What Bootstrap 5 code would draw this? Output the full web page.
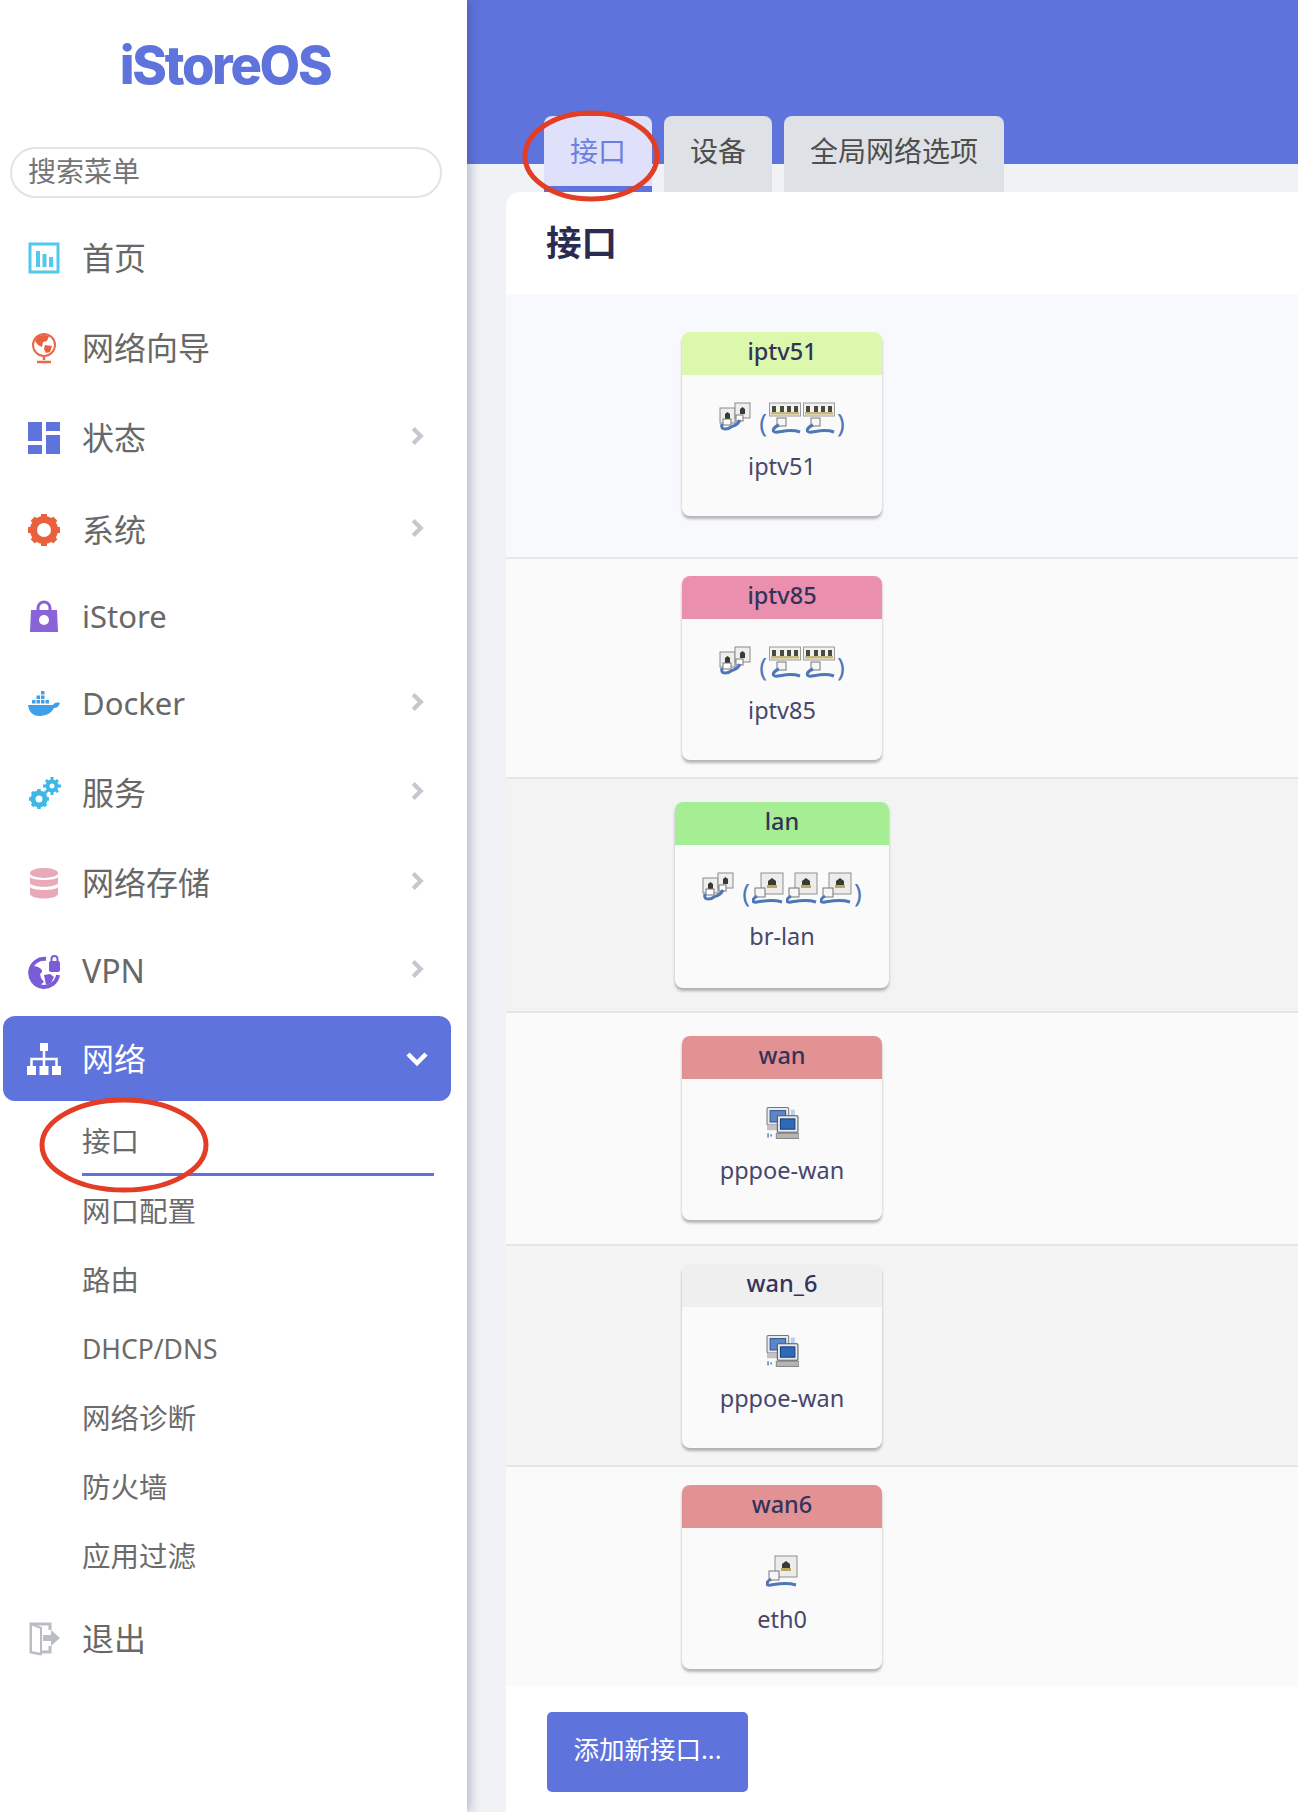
<!DOCTYPE html>
<html lang="zh-CN">
<head>
<meta charset="utf-8">
<title>iStoreOS 接口</title>
<link href="https://cdn.jsdelivr.net/npm/bootstrap@5.3.0/dist/css/bootstrap.min.css" rel="stylesheet">
<style>
html,body{height:1812px;overflow:hidden;margin:0;}
body{font-family:"Noto Sans","Noto Sans CJK SC",sans-serif;background:#f1f2f6;color:#32325d;}
.page{width:1298px;height:1812px;overflow:hidden;}
.sidebar{width:467px;flex:0 0 467px;height:1812px;background:#fff;box-shadow:3px 0 10px rgba(40,50,90,.3);z-index:2;}
.brand{height:147px;padding-top:33px;text-align:center;font-family:"Inter",sans-serif;font-weight:800;font-size:52.5px;line-height:64px;letter-spacing:-2.3px;color:#5f73dc;padding-right:17px;}
.search-box{margin-left:10px;width:432px;height:51px;font-size:28px;padding:0 16px 4px;border:2px solid #e2e3e6;box-shadow:none;}
.search-box::placeholder{color:#757575;}
.side-list{margin:17px 0 0 3px;width:448px;padding:0;list-style:none;}
.side-link{height:85px;padding:0 26px 0 23px;color:#686868;font-size:32px;border-radius:12px;text-decoration:none;}
.side-link.latin-main{font-size:31px;}
.side-link.active-item{background:#5f73dc;color:#fff;}
.ico{width:36px;height:36px;flex:0 0 36px;margin-right:20px;}
.chev{width:15px;height:22px;flex:0 0 15px;margin-left:auto;margin-top:-4px;}
.chev-down{width:24px;height:16px;flex:0 0 24px;margin-left:auto;margin-right:-4px;}
.sp2{margin-top:2px}.sp3{margin-top:3px}.sp4{margin-top:4px}.sp5{margin-top:5px}.sp7{margin-top:7px}.sp9{margin-top:6px}
.sub-list{margin:8px 0 0 82px;width:352px;padding:0;list-style:none;}
.sub-link{height:67px;margin-bottom:2px;color:#6b6b6b;font-size:28.5px;text-decoration:none;}
.sub-link.current{border-bottom:3px solid #5f73dc;}
.latin-sub{font-size:26.5px;}
.main-area{flex:1 1 auto;min-width:0;height:1812px;overflow:hidden;background:linear-gradient(#5f73dc 164px,#f1f2f6 164px);}
.tab-row{margin:116px 0 0 77px;gap:12px;height:76px;flex-wrap:nowrap;}
.tab-item{height:76px;padding:17px 26px 0;background:#dee2e6;color:#4e4e4e;font-size:28px;line-height:37px;border-radius:8px 8px 0 0;text-decoration:none;white-space:nowrap;}
.tab-item.on{background:#dfe1fb;color:#6d7ede;border-bottom:6px solid #5f73dc;}
.panel{margin-left:39px;width:860px;height:1700px;background:#fff;border-radius:14px 0 0 0;}
.panel-head{height:100px;padding:0 0 0 40px;display:flex;align-items:center;font-size:35.5px;font-weight:700;color:#2b2b52;margin:0 0 2px;}
.net-row{display:flex;align-items:center;border-bottom:2px solid #e6e6e6;}
.net-cell{width:552px;display:flex;justify-content:center;}
.r1{height:265px;background:#f8f9fd;padding-bottom:3px}.r2{height:220px;background:#fafafa}.r3{height:234px;background:#f3f3f3}.r4{height:233px;background:#fafafa;padding-bottom:2px}.r5{height:221px;background:#f4f4f4}.r6{height:219px;background:#fafafa;border-bottom:0}
.iface{width:200px;height:184px;background:#fafafa;border-radius:8px;box-shadow:0 3px 3px rgba(0,0,0,.28);overflow:hidden;text-align:center;}
.iface.wide{width:214px;height:186px;}
.iface-top{height:43px;line-height:38px;font-size:23.5px;font-weight:500;color:#33335a;}
.green1{background:#dcf8ad}.pink{background:#ea90ae}.green2{background:#a6ee94}.red{background:#e39294}.grey{background:#efefef}
.iface-icons{height:62px;padding-top:27px;display:flex;justify-content:center;align-items:flex-start;gap:2px;}
.paren{font-size:26px;line-height:40px;color:#4d76b8;margin:0;}
.ic-port{width:32px;height:32px;}
.ic-bridge{width:32px;height:30px;margin-right:6px;}
.ic-ppp{width:33px;height:34px;}
.iface-label{margin-top:14px;font-size:23.5px;line-height:30px;color:#47476b;}
.add-wrap{padding:26px 0 0 41px;}
.add-btn{width:201px;height:80px;background:#5f73dc;border:0;border-radius:5px;color:#fff;font-size:25.5px;padding:0 0 6px;}
.mark-tab{position:absolute;left:520px;top:108px;width:142px;height:96px;z-index:5;pointer-events:none;}
.mark-side{position:absolute;left:36px;top:1095px;width:176px;height:101px;z-index:5;pointer-events:none;}
</style>
</head>
<body>
<svg width="0" height="0" class="d-block position-absolute">
<defs>
<symbol id="port" viewBox="0 0 32 32">
<rect x="9" y="1" width="22" height="21" fill="#ececec" stroke="#8f8f8f"/>
<path d="M16 15v-6l4-3 4 3v6z" fill="#3a3a32"/><rect x="15" y="13" width="10" height="3" fill="#b8a860"/>
<rect x="3" y="16" width="10" height="9" fill="#f6f6f6" stroke="#777"/>
<path d="M5 24C0 27-1 31 5 30c7-1 15-3 25 0" fill="none" stroke="#4f76b6" stroke-width="3"/>
</symbol>
<symbol id="switch" viewBox="0 0 32 32">
<rect x="0.5" y="1" width="31" height="13" fill="#f1f1f1" stroke="#9a9a9a"/>
<g fill="#4a4a3c"><rect x="3" y="4" width="4" height="6"/><rect x="11" y="4" width="4" height="6"/><rect x="18" y="4" width="4" height="6"/><rect x="25" y="4" width="4" height="6"/></g>
<rect x="2" y="10" width="28" height="2.500" fill="#c4b878"/>
<rect x="8" y="16" width="9" height="8" fill="#f6f6f6" stroke="#777"/>
<path d="M10 23C3 26 2 31 9 30c7-1 13-3 22 0" fill="none" stroke="#4f76b6" stroke-width="3"/>
</symbol>
<symbol id="bridge" viewBox="0 0 32 30">
<rect x="1" y="6" width="15" height="15" fill="#eee" stroke="#8a8a8a"/><rect x="16" y="1" width="15" height="15" fill="#eee" stroke="#8a8a8a"/>
<path d="M6 17v-5l2.500-2 2.500 2v5z" fill="#3a3a32"/><path d="M21 12V7l2.500-2 2.500 2v5z" fill="#3a3a32"/>
<rect x="4" y="17" width="8" height="6" fill="#fff" stroke="#777"/><rect x="17" y="13" width="7" height="6" fill="#fff" stroke="#777"/>
<path d="M3 22c-2 6 5 6 9 3 4-2 6-1 9-7" fill="none" stroke="#4f76b6" stroke-width="3"/>
</symbol>
<symbol id="ppp" viewBox="0 0 32 32">
<rect x="1" y="1" width="21" height="17" rx="1" fill="#e6e9ee" stroke="#777"/><rect x="4" y="4" width="15" height="11" fill="#5d86c6" stroke="#2f5590"/>
<rect x="24" y="3" width="4" height="6" fill="#bcd0ea"/>
<rect x="1" y="18" width="12" height="5" fill="#c2c2c2"/>
<rect x="11" y="9" width="20" height="16" rx="1" fill="#e6e9ee" stroke="#555"/><rect x="14" y="12" width="14" height="10" fill="#2f68b4" stroke="#173f7c"/>
<rect x="10" y="26" width="22" height="5" fill="#b5b5b5" stroke="#888"/>
<path d="M2 26v4M5 27v2" stroke="#5d86c6" stroke-width="1.500"/>
</symbol>
<symbol id="chevR" viewBox="0 0 14 20"><path d="M3 3l7 7-7 7" fill="none" stroke="#c5c8ce" stroke-width="4"/></symbol>
</defs>
</svg>

<div class="page d-flex position-relative">
<aside class="sidebar">
  <div class="brand">iStoreOS</div>
  <input class="form-control rounded-pill search-box" type="text" placeholder="搜索菜单">
  <ul class="side-list">
    <li><a class="side-link d-flex align-items-center" href="#">
      <svg class="ico" viewBox="0 0 36 36"><rect x="4" y="4" width="28" height="28" fill="none" stroke="#53c8ee" stroke-width="3"/><rect x="10" y="11" width="4" height="16" fill="#53c8ee"/><rect x="16.500" y="14" width="4" height="13" fill="#53c8ee"/><rect x="23" y="17" width="4" height="10" fill="#53c8ee"/></svg>首页</a></li>
    <li class="sp5"><a class="side-link d-flex align-items-center" href="#">
      <svg class="ico" viewBox="0 0 36 36"><circle cx="18" cy="15" r="11" fill="#fff" stroke="#e8694a" stroke-width="2"/><path d="M11 7c3-2 8-3 12-1l-2 5-4 1-1 5-4-2-3-4zM19 15l7 1-2 6-4 1-2-4z" fill="#e8613c"/><path d="M18 27v3M11 32h14" stroke="#e8694a" stroke-width="2.500"/></svg>网络向导</a></li>
    <li class="sp5"><a class="side-link d-flex align-items-center" href="#">
      <svg class="ico" viewBox="0 0 36 36"><g fill="#5f73dc"><rect x="2" y="2" width="14" height="19"/><rect x="20" y="2" width="14" height="9"/><rect x="2" y="25" width="14" height="9"/><rect x="20" y="15" width="14" height="19"/></g></svg>状态<svg class="chev"><use href="#chevR"/></svg></a></li>
    <li class="sp7"><a class="side-link d-flex align-items-center" href="#">
      <svg class="ico" viewBox="0 0 36 36"><circle cx="18" cy="18" r="10.500" fill="none" stroke="#e8613c" stroke-width="7"/><g stroke="#e8613c" stroke-width="6"><path d="M18 2v6M18 28v6M2 18h6M28 18h6M6.700 6.700l4 4M25.300 25.300l4 4M6.700 29.300l4-4M25.300 10.700l4-4"/></g></svg>系统<svg class="chev"><use href="#chevR"/></svg></a></li>
    <li class="sp2"><a class="side-link latin-main d-flex align-items-center" href="#">
      <svg class="ico" viewBox="0 0 36 36"><path d="M5 11h26l1 22H4z" fill="#8a63d8"/><path d="M12 13V9a6 6 0 0 1 12 0v4" fill="none" stroke="#8a63d8" stroke-width="3"/><circle cx="18" cy="21" r="5" fill="#fff"/></svg>iStore</a></li>
    <li class="sp2"><a class="side-link latin-main d-flex align-items-center" href="#">
      <svg class="ico" viewBox="0 0 36 36"><path d="M2 19h25c1-2 3-3 7-2-1 3-3 5-6 5-3 6-9 8-15 8-6 0-10-4-11-11z" fill="#3f9fe8"/><g fill="#3f9fe8"><rect x="6" y="14" width="3.500" height="3.500"/><rect x="10.500" y="14" width="3.500" height="3.500"/><rect x="15" y="14" width="3.500" height="3.500"/><rect x="19.500" y="14" width="3.500" height="3.500"/><rect x="10.500" y="9.500" width="3.500" height="3.500"/><rect x="15" y="9.500" width="3.500" height="3.500"/><rect x="15" y="5" width="3.500" height="3.500"/></g></svg>Docker<svg class="chev"><use href="#chevR"/></svg></a></li>
    <li class="sp4"><a class="side-link d-flex align-items-center" href="#">
      <svg class="ico" viewBox="0 0 36 36"><circle cx="13" cy="24" r="6" fill="none" stroke="#3db8e6" stroke-width="5"/><path d="M13 14v4M13 30v4M3 24h4M19 24h4M6 17l3 3M17 28l3 3M6 31l3-3M17 20l3-3" stroke="#3db8e6" stroke-width="3.500"/><circle cx="26" cy="11" r="4.500" fill="none" stroke="#3db8e6" stroke-width="4"/><path d="M26 2v4M26 16v4M17 11h4M31 11h4M20 5l2.500 2.500M29.500 14.500L32 17M20 17l2.500-2.500M29.500 7.500L32 5" stroke="#3db8e6" stroke-width="3"/></svg>服务<svg class="chev"><use href="#chevR"/></svg></a></li>
    <li class="sp5"><a class="side-link d-flex align-items-center" href="#">
      <svg class="ico" viewBox="0 0 36 36"><g fill="#e9a9b8"><ellipse cx="18" cy="8" rx="14" ry="5"/><path d="M4 12c2 4 26 4 28 0v6c-2 5-26 5-28 0z"/><path d="M4 22c2 4 26 4 28 0v7c-2 6-26 6-28 0z"/></g></svg>网络存储<svg class="chev"><use href="#chevR"/></svg></a></li>
    <li class="sp3"><a class="side-link d-flex align-items-center" href="#">
      <svg class="ico" viewBox="0 0 36 36"><path d="M20 6a14 14 0 1 0 12 16" fill="none" stroke="#7b5cd6" stroke-width="4"/><path d="M7 13c3 0 6 1 8 3s1 4-1 5l1 4 3 4-4 3c-3-1-8-5-9-11zM18 22l6-1 4 3-3 6-5 2z" fill="#7b5cd6"/><rect x="23" y="8" width="11" height="11" rx="2" fill="#7b5cd6"/><path d="M25.500 9V6a3 3 0 0 1 6 0v3" fill="none" stroke="#7b5cd6" stroke-width="2"/></svg>VPN<svg class="chev"><use href="#chevR"/></svg></a></li>
    <li class="sp3"><a class="side-link active-item d-flex align-items-center" href="#">
      <svg class="ico" viewBox="0 0 36 36"><g fill="#fff"><rect x="14" y="2" width="8" height="8"/><rect x="1" y="25" width="9" height="9"/><rect x="13.500" y="25" width="9" height="9"/><rect x="26" y="25" width="9" height="9"/></g><path d="M18 10v15M5.500 25v-7h25v7" fill="none" stroke="#fff" stroke-width="2.500"/></svg>网络<svg class="chev-down" viewBox="0 0 24 16"><path d="M3 3l9 9 9-9" fill="none" stroke="#fff" stroke-width="4.500"/></svg></a></li>
  </ul>
  <ul class="sub-list">
    <li><a class="sub-link current d-flex align-items-center" href="#">接口</a></li>
    <li><a class="sub-link d-flex align-items-center" href="#">网口配置</a></li>
    <li><a class="sub-link d-flex align-items-center" href="#">路由</a></li>
    <li><a class="sub-link latin-sub d-flex align-items-center" href="#">DHCP/DNS</a></li>
    <li><a class="sub-link d-flex align-items-center" href="#">网络诊断</a></li>
    <li><a class="sub-link d-flex align-items-center" href="#">防火墙</a></li>
    <li><a class="sub-link d-flex align-items-center" href="#">应用过滤</a></li>
  </ul>
  <ul class="side-list sp9">
    <li><a class="side-link d-flex align-items-center" href="#">
      <svg class="ico" viewBox="0 0 36 36"><path d="M24 9V3H5v28l10 2" fill="none" stroke="#b9bdc4" stroke-width="3"/><path d="M24 25v6H8" fill="none" stroke="#b9bdc4" stroke-width="3"/><path d="M5 3l10 4v26l-10-2z" fill="#fff" stroke="#b9bdc4" stroke-width="2"/><path d="M17 14h8V9l9 8-9 8v-5h-8z" fill="#b9bdc4"/></svg>退出</a></li>
  </ul>
</aside>

<main class="main-area">
  <ul class="nav tab-row">
    <li class="nav-item"><a class="tab-item on d-block" href="#">接口</a></li>
    <li class="nav-item"><a class="tab-item d-block" href="#">设备</a></li>
    <li class="nav-item"><a class="tab-item d-block" href="#">全局网络选项</a></li>
  </ul>
  <section class="panel">
    <h2 class="panel-head">接口</h2>

    <div class="net-row r1"><div class="net-cell"><div class="iface">
      <div class="iface-top green1">iptv51</div>
      <div class="iface-icons"><svg class="ic-bridge"><use href="#bridge"/></svg><span class="paren">(</span><svg class="ic-port"><use href="#switch"/></svg><svg class="ic-port"><use href="#switch"/></svg><span class="paren">)</span></div>
      <div class="iface-label">iptv51</div>
    </div></div></div>

    <div class="net-row r2"><div class="net-cell"><div class="iface">
      <div class="iface-top pink">iptv85</div>
      <div class="iface-icons"><svg class="ic-bridge"><use href="#bridge"/></svg><span class="paren">(</span><svg class="ic-port"><use href="#switch"/></svg><svg class="ic-port"><use href="#switch"/></svg><span class="paren">)</span></div>
      <div class="iface-label">iptv85</div>
    </div></div></div>

    <div class="net-row r3"><div class="net-cell"><div class="iface wide">
      <div class="iface-top green2">lan</div>
      <div class="iface-icons"><svg class="ic-bridge"><use href="#bridge"/></svg><span class="paren">(</span><svg class="ic-port"><use href="#port"/></svg><svg class="ic-port"><use href="#port"/></svg><svg class="ic-port"><use href="#port"/></svg><span class="paren">)</span></div>
      <div class="iface-label">br-lan</div>
    </div></div></div>

    <div class="net-row r4"><div class="net-cell"><div class="iface">
      <div class="iface-top red">wan</div>
      <div class="iface-icons"><svg class="ic-ppp"><use href="#ppp"/></svg></div>
      <div class="iface-label">pppoe-wan</div>
    </div></div></div>

    <div class="net-row r5"><div class="net-cell"><div class="iface">
      <div class="iface-top grey">wan_6</div>
      <div class="iface-icons"><svg class="ic-ppp"><use href="#ppp"/></svg></div>
      <div class="iface-label">pppoe-wan</div>
    </div></div></div>

    <div class="net-row r6"><div class="net-cell"><div class="iface">
      <div class="iface-top red">wan6</div>
      <div class="iface-icons"><svg class="ic-port"><use href="#port"/></svg></div>
      <div class="iface-label">eth0</div>
    </div></div></div>

    <div class="add-wrap"><button class="btn add-btn" type="button">添加新接口...</button></div>
  </section>
</main>

<svg class="mark-tab" viewBox="0 0 142 96"><ellipse cx="71" cy="48" rx="66" ry="43" fill="none" stroke="#e33d26" stroke-width="5"/></svg>
<svg class="mark-side" viewBox="0 0 176 101"><ellipse cx="88" cy="50" rx="82" ry="45" fill="none" stroke="#e33d26" stroke-width="5"/></svg>
</div>
</body>
</html>
